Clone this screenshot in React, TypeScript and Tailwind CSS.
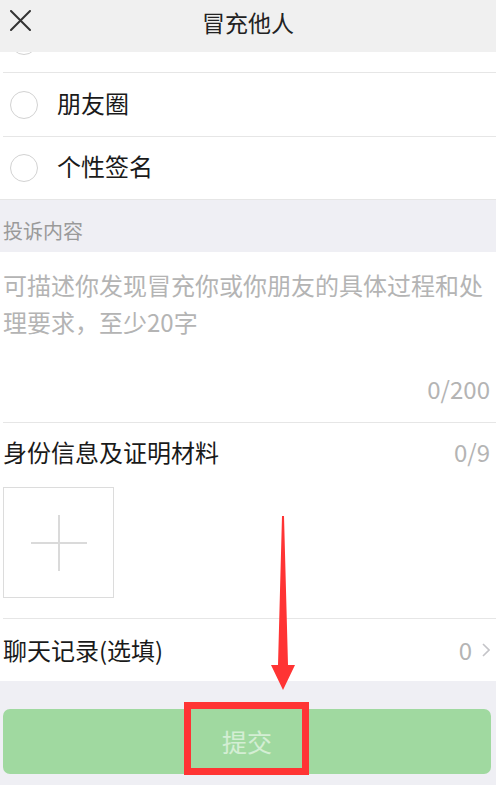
import React from "react";

const font = { fontFamily: '"Noto Sans CJK SC", "Noto Sans", sans-serif' };

function Radio() {
  return <div className="w-[28px] h-[28px] rounded-full border border-[#d2d2d2] bg-white shrink-0" />;
}

export default function App() {
  return (
    <div className="relative w-[496px] h-[785px] overflow-hidden bg-[#efeff4] text-[#1a1a1a]" style={font}>
      {/* Header */}
      <div className="relative h-[52px] bg-[#f0f0f0] flex items-center justify-center pb-[7px]">
        <svg className="absolute left-[10px] top-[10px]" width="21" height="21" viewBox="0 0 21 21">
          <path d="M1 1 L20 20 M20 1 L1 20" stroke="#333" strokeWidth="2" strokeLinecap="round" />
        </svg>
        <span className="text-[23px] leading-none text-[#222]">冒充他人</span>
      </div>

      {/* Partially visible row */}
      <div className="h-[20px] bg-white overflow-hidden pl-[10px]">
        <div className="-mt-[25px]">
          <Radio />
        </div>
      </div>
      <div className="bg-white pl-[3px]">
        <div className="h-px bg-[#e6e6e6]" />
      </div>

      {/* Options */}
      <div className="bg-white">
        <div className="h-[63px] flex items-center pl-[10px] gap-[19px]">
          <Radio />
          <span className="text-[24px] leading-none mb-[4px]">朋友圈</span>
        </div>
        <div className="pl-[3px]">
          <div className="h-px bg-[#e6e6e6]" />
        </div>
        <div className="h-[62px] flex items-center pl-[10px] gap-[19px]">
          <Radio />
          <span className="text-[24px] leading-none mb-[4px]">个性签名</span>
        </div>
      </div>
      <div className="h-px bg-[#e6e6e6]" />

      {/* Section label */}
      <div className="h-[52px] flex items-center pl-[3px] pt-[10px]">
        <span className="text-[20px] leading-none text-[#9a9a9a]">投诉内容</span>
      </div>

      {/* Textarea */}
      <div className="bg-white">
        <div className="h-[170px] flex flex-col pl-[3px] pr-[6px] pt-[14px]">
          <div className="text-[24px] leading-[37px] text-[#b4b4b4]">
            可描述你发现冒充你或你朋友的具体过程和处
            <br />
            理要求，至少20字
          </div>
          <div className="mt-auto mb-[21px] text-right text-[24px] leading-none text-[#b4b4b4]">0/200</div>
        </div>
        <div className="pl-[3px]">
          <div className="h-px bg-[#e6e6e6]" />
        </div>

        {/* Upload */}
        <div className="flex items-center justify-between pl-[3px] pr-[6px] h-[64px] pb-[7px]">
          <span className="text-[24px] leading-none">身份信息及证明材料</span>
          <span className="text-[24px] leading-none text-[#b4b4b4]">0/9</span>
        </div>
        <div className="pl-[3px] pb-[20px]">
          <div className="w-[111px] h-[111px] border border-[#dcdcdc] flex items-center justify-center">
            <svg width="56" height="56" viewBox="0 0 56 56">
              <path d="M0 28 H56 M28 0 V56" stroke="#dadada" strokeWidth="2" />
            </svg>
          </div>
        </div>
        <div className="pl-[3px]">
          <div className="h-px bg-[#e6e6e6]" />
        </div>

        {/* Chat record */}
        <div className="h-[62px] flex items-center justify-between pl-[3px] pr-[6px]">
          <span className="text-[24px] leading-none">聊天记录(选填)</span>
          <div className="flex items-center gap-[10px]">
            <span className="text-[24px] leading-none text-[#b4b4b4]">0</span>
            <svg width="8" height="14" viewBox="0 0 8 14">
              <path d="M1 1 L7 7 L1 13" stroke="#c4c4c8" strokeWidth="1.6" fill="none" />
            </svg>
          </div>
        </div>
      </div>

      {/* Submit */}
      <div className="pt-[28px] pl-[3px] pr-[5px]">
        <div className="h-[65px] rounded-[7px] bg-[#a0d9a0] flex items-center justify-center">
          <span className="text-[25px] leading-none text-white/55">提交</span>
        </div>
      </div>

      {/* Annotation overlays */}
      <div className="absolute left-[184px] top-[702px] w-[125px] h-[73px] border-[7px] border-[#ff3434]" />
      <svg className="absolute left-0 top-0 pointer-events-none" width="496" height="785" viewBox="0 0 496 785">
        <polygon points="282,516 284,516 288,665 295,665 283,690 271,665 278,665" fill="#ff3434" />
      </svg>
    </div>
  );
}
